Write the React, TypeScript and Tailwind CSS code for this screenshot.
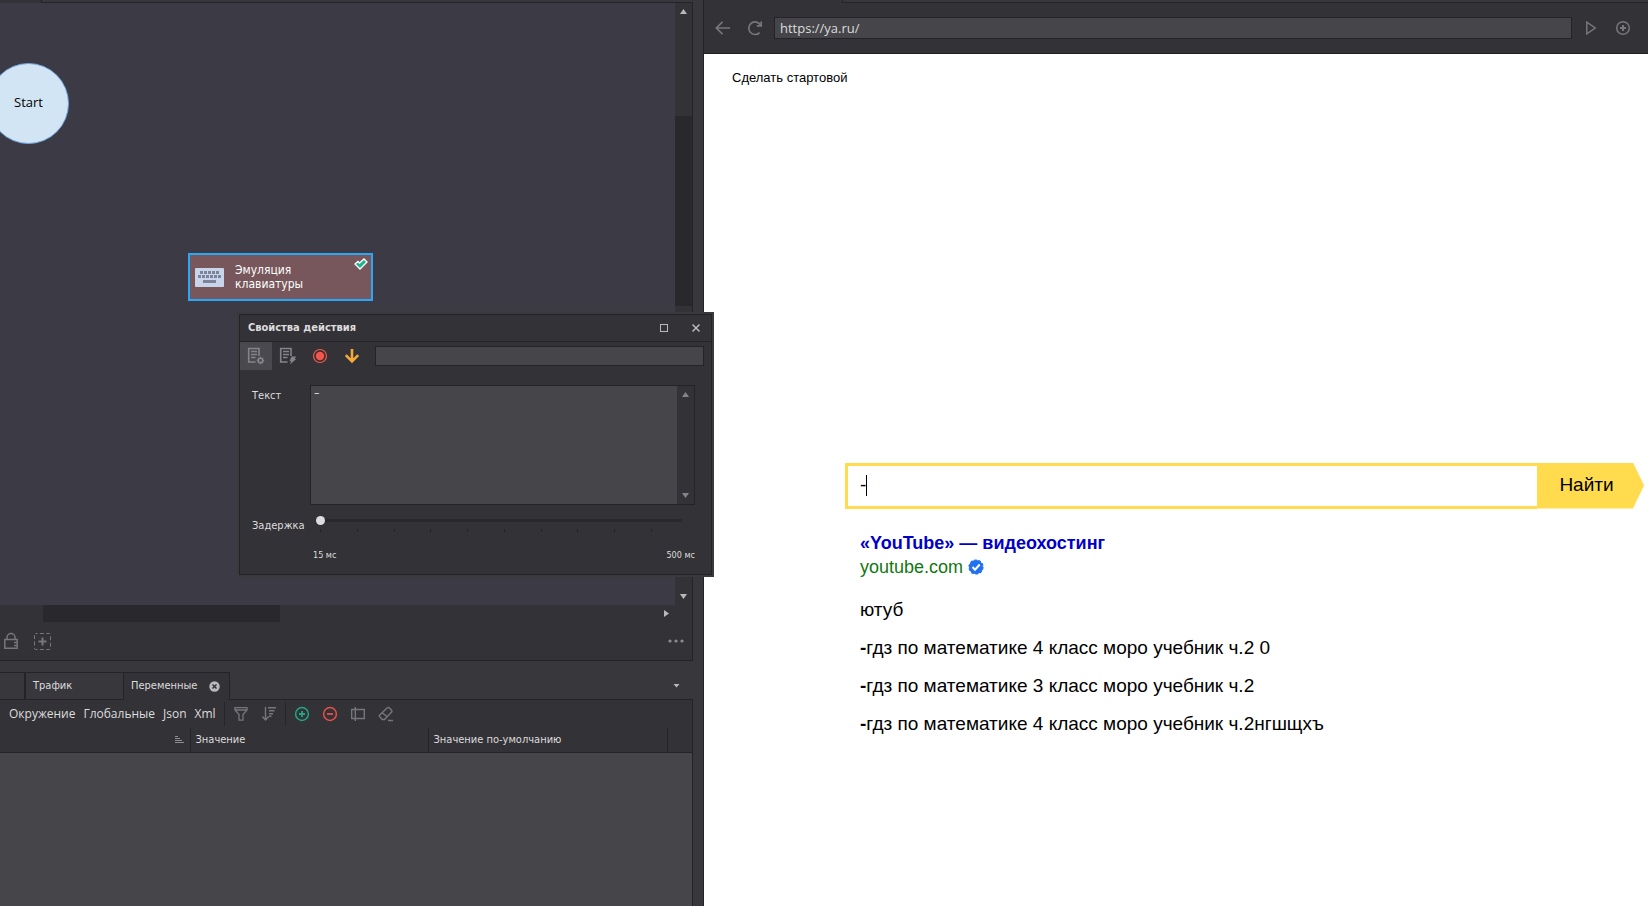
import { useState } from "react";
import type { ReactNode } from "react";

const TICKS = [0, 1, 2, 3, 4, 5, 6, 7, 8, 9];

const SUGGESTIONS = [
  { prefix: "", text: "ютуб" },
  { prefix: "-", text: "гдз по математике 4 класс моро учебник ч.2 0" },
  { prefix: "-", text: "гдз по математике 3 класс моро учебник ч.2" },
  { prefix: "-", text: "гдз по математике 4 класс моро учебник ч.2нгшщхъ" },
];

function Triangle({ dir, className = "" }: { dir: "up" | "down" | "right"; className?: string }) {
  const points = { up: "0,6 7,6 3.5,1", down: "0,1 7,1 3.5,6", right: "1,0 6,3.5 1,7" }[dir];
  return (
    <svg width="7" height="7" viewBox="0 0 7 7" className={className}>
      <polygon points={points} fill="currentColor" />
    </svg>
  );
}

function IconButton({ label, className = "", children }: { label: string; className?: string; children: ReactNode }) {
  return (
    <button aria-label={label} className={`flex shrink-0 items-center justify-center ${className}`}>
      {children}
    </button>
  );
}

/* Lines of a document, shared by both property page icons */
function DocLines() {
  return (
    <>
      <path d="M8.5 15H1.7V1.5H12V9" stroke="currentColor" strokeWidth="1.6" />
      <path d="M4 4.5H10M4 7.5H10M4 10.5H8.5" stroke="currentColor" strokeWidth="1.3" />
    </>
  );
}

function Canvas() {
  return (
    <div className="relative min-w-0 flex-1 overflow-hidden bg-[#3c3b45]">
      <div className="absolute -left-3 top-[60px] flex size-[81px] items-center justify-center rounded-full border border-[#6fa3dc] bg-[#d2e5f4] pb-0.5 font-['Open_Sans',sans-serif] text-[13px] text-black">
        Start
      </div>
      <div className="absolute left-[188px] top-[250px] flex h-12 w-[185px] items-center border-2 border-[#29a8f8] bg-[#77575c] pl-1">
        <svg width="31" height="22" viewBox="0 0 31 22" className="shrink-0">
          <rect x="1" y="2" width="29" height="19" rx="1" fill="#c8d4ea" />
          <path d="M6 6.5H25" stroke="#7d8399" strokeWidth="3" strokeDasharray="3 1" />
          <path d="M4 10.5H27" stroke="#7d8399" strokeWidth="3" strokeDasharray="3 1" />
          <path d="M9 15.5H22" stroke="#7d8399" strokeWidth="3" />
        </svg>
        <span className="ml-2.5 w-24 text-xs leading-[14px] text-white">Эмуляция клавиатуры</span>
        <svg width="14" height="12" viewBox="0 0 14 12" className="absolute right-[3px] top-[3px]">
          <path d="M1 6L4 3.5L5.5 5L10 1L13 4L6 11Z" fill="#21b58f" stroke="#fff" strokeWidth="1.3" />
        </svg>
      </div>
    </div>
  );
}

function ProjectPanel() {
  return (
    <section className="flex min-h-0 flex-1 flex-col">
      <div className="flex h-[3px] shrink-0">
        <div className="w-[41px] bg-[#333236]" />
        <div className="flex-1 border-b border-l border-[#242328] bg-[#38373b]" />
      </div>
      <div className="flex min-h-0 flex-1 flex-col border-b border-r border-[#242328] bg-[#333236]">
        <div className="flex min-h-0 flex-1">
          <Canvas />
          <div className="flex w-[17px] flex-col items-center justify-between py-[5px] text-[#b9b8bb]">
            <Triangle dir="up" className="shrink-0" />
            <div className="mb-[287px] mt-[101px] w-full flex-1 bg-[#29282c]" />
            <Triangle dir="down" className="shrink-0" />
          </div>
        </div>
        <div className="flex h-[17px] shrink-0 items-center pr-[22px] text-[#b9b8bb]">
          <div className="ml-[43px] h-full w-[237px] bg-[#29282c]" />
          <Triangle dir="right" className="ml-auto" />
        </div>
        <div className="flex h-[38px] shrink-0 items-center pl-1 pr-2 text-[#77767d]">
          <IconButton label="Заблокировать">
            <svg width="15" height="18" viewBox="0 0 15 18" fill="none" stroke="currentColor" strokeWidth="1.5">
              <path d="M3 7.5V5.5A4 4 0 0 1 11 5.5V7.5" />
              <path d="M0.8 7.5H13.2V16.2H0.8ZM10 10.5H13M10 13.5H13" />
            </svg>
          </IconButton>
          <IconButton label="Добавить" className="ml-[15px]">
            <svg width="17" height="17" viewBox="0 0 17 17" fill="none" stroke="currentColor">
              <rect x="0.5" y="0.5" width="16" height="16" rx="1" strokeDasharray="4 2.4" strokeDashoffset="2" />
              <path d="M8.5 4.5V12.5M4.5 8.5H12.5" strokeWidth="2" />
            </svg>
          </IconButton>
          <IconButton label="Ещё" className="ml-auto">
            <svg width="16" height="4" viewBox="0 0 16 4" fill="#8d8c92">
              <circle cx="2" cy="2" r="1.6" />
              <circle cx="8" cy="2" r="1.6" />
              <circle cx="14" cy="2" r="1.6" />
            </svg>
          </IconButton>
        </div>
      </div>
    </section>
  );
}

function VariablesPanel() {
  return (
    <section className="mt-[11px] flex h-[234px] shrink-0 flex-col">
      <div className="flex h-7 shrink-0">
        <div className="w-[25px] border-b border-r border-t border-[#242328]" />
        <button className="w-[98px] border-b border-l border-t border-[#242328] pl-[7px] text-left text-[#dddcde]">Трафик</button>
        <div className="flex w-[107px] items-center justify-between border-x border-t border-[#242328] bg-[#333236] pl-[7px] pr-[9px]">
          <button className="text-[#dddcde]">Переменные</button>
          <IconButton label="Закрыть вкладку">
            <svg width="11" height="11" viewBox="0 0 11 11">
              <circle cx="5.5" cy="5.5" r="5.2" fill="#b9b8bb" />
              <path d="M3.5 3.5L7.5 7.5M7.5 3.5L3.5 7.5" stroke="#333236" strokeWidth="1.5" />
            </svg>
          </IconButton>
        </div>
        <div className="flex flex-1 items-center justify-end border-b border-[#242328] pr-[13px] text-[#b9b8bb]">
          <svg width="7" height="4" viewBox="0 0 7 4">
            <polygon points="0.5,0 6.5,0 3.5,3.5" fill="currentColor" />
          </svg>
        </div>
      </div>
      <div className="flex min-h-0 flex-1 flex-col border-r border-[#242328] bg-[#464549]">
        <div className="flex h-7 shrink-0 items-center bg-[#333236] pl-[9px] font-['Open_Sans',sans-serif] text-xs text-[#dddcde]">
          <div className="flex gap-2">
            <button>Окружение</button>
            <button>Глобальные</button>
            <button>Json</button>
            <button>Xml</button>
          </div>
          <div className="ml-2 h-6 w-px bg-[#26252a]" />
          <div className="flex gap-3 px-2 text-[#77767d]">
            <IconButton label="Фильтр">
              <svg width="16" height="16" viewBox="0 0 16 16" fill="none" stroke="currentColor" strokeWidth="1.3">
                <path d="M2 1.7H14V4L10 8.5V14.2H6V8.5L2 4ZM2 4H14" />
              </svg>
            </IconButton>
            <IconButton label="Сортировка">
              <svg width="16" height="16" viewBox="0 0 16 16" fill="none" stroke="currentColor" strokeWidth="1.4">
                <path d="M4.5 1V14M1.3 10.5L4.5 14L7.7 10.5M7 1.7H15M8 4.7H13.5M8 7.7H12M8 10.2H10.5" />
              </svg>
            </IconButton>
          </div>
          <div className="h-6 w-px bg-[#26252a]" />
          <div className="flex gap-3 px-2 text-[#77767d]">
            <IconButton label="Добавить переменную" className="text-[#21a583]">
              <svg width="16" height="16" viewBox="0 0 16 16" fill="none" stroke="currentColor" strokeWidth="1.5">
                <circle cx="8" cy="8" r="6.4" />
                <path d="M8 5V11M5 8H11" strokeWidth="1.8" />
              </svg>
            </IconButton>
            <IconButton label="Удалить переменную" className="text-[#e5504b]">
              <svg width="16" height="16" viewBox="0 0 16 16" fill="none" stroke="currentColor" strokeWidth="1.5">
                <circle cx="8" cy="8" r="6.4" />
                <path d="M5 8H11" strokeWidth="1.8" />
              </svg>
            </IconButton>
            <IconButton label="Переименовать">
              <svg width="16" height="16" viewBox="0 0 16 16" fill="none" stroke="currentColor" strokeWidth="1.4">
                <path d="M1.7 3.5H14.3V12.5H1.7ZM5.3 1V15" />
              </svg>
            </IconButton>
            <IconButton label="Очистить">
              <svg width="16" height="16" viewBox="0 0 16 16" fill="none" stroke="currentColor" strokeWidth="1.4">
                <path d="M1.5 9.3L9.3 1.8Q10.2 1 11.2 1.8L13.6 4.2Q14.4 5.2 13.6 6.1L6.5 13.5H4.3L1.5 10.6Q1 10 1.5 9.3ZM4.2 6.8L9.2 10.8M10 14.5H15" />
              </svg>
            </IconButton>
          </div>
        </div>
        <table className="w-full table-fixed bg-[#333236] text-left text-[#dddcde]">
          <thead>
            <tr className="h-6 border-b border-[#242328]">
              <th className="w-[190px] border-r border-[#242328] pr-1.5">
                <svg width="9" height="7" viewBox="0 0 9 7" className="ml-auto" stroke="#8d8c92">
                  <path d="M0 0.5H3M0 2.5H5M0 4.5H7M0 6.5H9" />
                </svg>
              </th>
              <th className="w-[238px] border-r border-[#242328] pl-[5px] font-normal">Значение</th>
              <th className="w-[239px] border-r border-[#242328] pl-[5px] font-normal">Значение по-умолчанию</th>
              <th />
            </tr>
          </thead>
        </table>
      </div>
    </section>
  );
}

function ActionDialog() {
  const [text, setText] = useState("–");
  const [delay, setDelay] = useState(15);

  return (
    <div
      role="dialog"
      aria-labelledby="dialog-title"
      className="absolute left-[237px] top-[312px] z-10 w-[477px] border-2 border-[#3a393d] bg-[#333236] text-[#dddcde]"
    >
      <div className="border border-[#242328]">
        <div className="flex h-[27px] items-center border-b border-[#242328] pl-2 pr-[11px]">
          <h2 id="dialog-title" className="text-[11px] font-bold">Свойства действия</h2>
          <IconButton label="Развернуть" className="ml-auto">
            <svg width="8" height="8" viewBox="0 0 8 8" fill="none" stroke="#b9b8bb">
              <rect x="0.5" y="0.5" width="7" height="7" />
            </svg>
          </IconButton>
          <IconButton label="Закрыть" className="ml-6">
            <svg width="8" height="8" viewBox="0 0 8 8" stroke="#b9b8bb" strokeWidth="1.5">
              <path d="M0.5 0.5L7.5 7.5M7.5 0.5L0.5 7.5" />
            </svg>
          </IconButton>
        </div>

        <div className="flex h-7 items-center pr-[7px] text-[#85848c]">
          <IconButton label="Свойства" className="h-7 w-8 bg-[#4a494d]">
            <svg width="18" height="18" viewBox="0 0 18 18" fill="none">
              <DocLines />
              <circle cx="13.5" cy="13.5" r="2.2" stroke="currentColor" strokeWidth="1.6" />
              <path d="M13.5 9.8V11M13.5 16V17.2M9.8 13.5H11M16 13.5H17.2M11 11L11.8 11.8M15.2 15.2L16 16M16 11L15.2 11.8M11.8 15.2L11 16" stroke="currentColor" strokeWidth="1.3" />
            </svg>
          </IconButton>
          <IconButton label="Дополнительно" className="h-7 w-8">
            <svg width="18" height="18" viewBox="0 0 18 18" fill="none">
              <DocLines />
              <path d="M12.5 9.5H17L15.8 12H17.2L11 17.5L12.3 14.2H10.5Z" fill="currentColor" />
            </svg>
          </IconButton>
          <IconButton label="Запись" className="h-7 w-8">
            <svg width="16" height="16" viewBox="0 0 16 16" fill="none">
              <circle cx="8" cy="8" r="6.5" stroke="#f5554a" strokeWidth="1.2" />
              <circle cx="8" cy="8" r="4.2" fill="#f5554a" />
            </svg>
          </IconButton>
          <IconButton label="Выполнить" className="h-7 w-8">
            <svg width="16" height="16" viewBox="0 0 16 16" fill="none" stroke="#f5a936" strokeWidth="2.6">
              <path d="M8 1V13M1.8 7.2L8 13.4L14.2 7.2" />
            </svg>
          </IconButton>
          <input
            aria-label="Комментарий"
            className="ml-[7px] h-5 min-w-0 flex-1 border border-[#242328] bg-[#464549] px-1 outline-none"
          />
        </div>

        <div className="flex pl-3 pr-4 pt-[15px]">
          <label htmlFor="action-text" className="w-[58px] shrink-0 pt-[3px]">Текст</label>
          <div className="flex h-[120px] flex-1 border border-[#242328]">
            <textarea
              id="action-text"
              value={text}
              onChange={(e) => setText(e.target.value)}
              className="min-w-0 flex-1 resize-none bg-[#464549] px-[3px] text-xs leading-[14px] outline-none"
            />
            <div className="flex w-[17px] flex-col items-center justify-between py-[5px] text-[#85848c]">
              <Triangle dir="up" />
              <Triangle dir="down" />
            </div>
          </div>
        </div>

        <div className="flex h-[69px] pl-3 pr-4 pt-2.5">
          <label htmlFor="action-delay" className="w-[58px] shrink-0 pt-[3px]">Задержка</label>
          <div className="min-w-0 flex-1">
            <div className="pl-1.5 pr-[13px]">
              <input
                id="action-delay"
                type="range"
                min={15}
                max={500}
                value={delay}
                onChange={(e) => setDelay(Number(e.target.value))}
                className="block h-[11px] w-full appearance-none bg-transparent [&::-webkit-slider-runnable-track]:h-[3px] [&::-webkit-slider-runnable-track]:rounded-full [&::-webkit-slider-runnable-track]:bg-[#29282c] [&::-webkit-slider-thumb]:-mt-[3px] [&::-webkit-slider-thumb]:size-[9px] [&::-webkit-slider-thumb]:appearance-none [&::-webkit-slider-thumb]:rounded-full [&::-webkit-slider-thumb]:bg-[#dddcde]"
              />
            </div>
            <div className="mt-[3px] flex justify-between pl-2.5 pr-[43px]">
              {TICKS.map((tick) => (
                <span key={tick} className="h-[3px] w-px bg-[#232227]" />
              ))}
            </div>
            <div className="mt-4 flex justify-between pl-[3px] text-[9px] leading-[14px]">
              <span>15 мс</span>
              <span>500 мс</span>
            </div>
          </div>
        </div>
      </div>
    </div>
  );
}

function BrowserBar() {
  return (
    <header className="shrink-0 border-b border-[#1f1e22] bg-[#333236]">
      <div className="flex h-[3px]">
        <div className="w-[138px]" />
        <div className="flex-1 border-b border-l border-[#242328] bg-[#38373b]" />
      </div>
      <div className="flex h-[50px] items-center pl-[11px] pr-[17px] text-[#77767d]">
        <IconButton label="Назад">
          <svg width="16" height="16" viewBox="0 0 16 16" fill="none" stroke="currentColor" strokeWidth="1.7">
            <path d="M15 8H1.5M7.5 1.8L1.3 8L7.5 14.2" />
          </svg>
        </IconButton>
        <IconButton label="Обновить" className="ml-4">
          <svg width="16" height="16" viewBox="0 0 16 16" fill="none" stroke="currentColor" strokeWidth="1.7">
            <path d="M12.6 12.6A6.3 6.3 0 1 1 13.6 5.2" />
            <path d="M14.2 1.5V5.8H9.8" />
          </svg>
        </IconButton>
        <input
          aria-label="Адрес"
          defaultValue="https://ya.ru/"
          className="ml-[11px] h-[22px] min-w-0 flex-1 border border-[#242328] bg-[#464549] px-[5px] font-['Open_Sans',sans-serif] text-[13px] text-[#dddcde] outline-none"
        />
        <IconButton label="Перейти" className="ml-3">
          <svg width="16" height="16" viewBox="0 0 16 16" fill="none" stroke="currentColor" strokeWidth="1.5">
            <path d="M2.8 2.2V13.8L11.2 8Z" />
          </svg>
        </IconButton>
        <IconButton label="Новая вкладка" className="ml-[15px]">
          <svg width="16" height="16" viewBox="0 0 16 16" fill="none" stroke="currentColor" strokeWidth="1.5">
            <circle cx="8" cy="8" r="6.3" />
            <path d="M8 5V11M5 8H11" strokeWidth="2" />
          </svg>
        </IconButton>
      </div>
    </header>
  );
}

function SearchPage() {
  const [query, setQuery] = useState("-");

  return (
    <main className="flex-1 bg-white font-['Liberation_Sans',Arial,sans-serif] text-black">
      <a href="#home" className="ml-7 mt-4 inline-block text-[13px] leading-4">Сделать стартовой</a>
      <form className="ml-[141px] mr-1 mt-[376px] flex h-[46px] text-[19px]" onSubmit={(e) => e.preventDefault()}>
        <div className="relative flex min-w-0 flex-1 border-y-[3px] border-l-[3px] border-[#ffdb4d]">
          <input
            aria-label="Запрос"
            value={query}
            onChange={(e) => setQuery(e.target.value)}
            className="min-w-0 flex-1 bg-white px-3 outline-none"
          />
          <span className="absolute left-[18px] top-[9px] h-[21px] w-px bg-black" />
        </div>
        <button className="w-[107px] bg-[#ffdb4d] pr-2 [clip-path:polygon(0_0,calc(100%-11px)_0,100%_50%,calc(100%-11px)_100%,0_100%)]">
          Найти
        </button>
      </form>
      <div className="ml-[156px] mt-[22px] text-lg leading-6">
        <a href="#youtube" className="block font-bold text-[#0000cc]">«YouTube» — видеохостинг</a>
        <div className="flex items-center gap-[5px] text-[#117711]">
          youtube.com
          <svg width="16" height="16" viewBox="0 0 16 16">
            <circle cx="8" cy="8" r="7" fill="#2070f0" stroke="#2070f0" strokeWidth="1.2" strokeDasharray="2.8 1.6" />
            <path d="M4.5 8L7 10.7L11.7 5.5" fill="none" stroke="#fff" strokeWidth="2" />
          </svg>
        </div>
      </div>
      <ul className="ml-[156px] mt-3 text-[19px] leading-[38px]">
        {SUGGESTIONS.map((item) => (
          <li key={item.text}>
            {item.prefix && <b>{item.prefix}</b>}
            {item.text}
          </li>
        ))}
      </ul>
    </main>
  );
}

export default function App() {
  return (
    <div className="relative flex h-screen overflow-hidden bg-[#38373b] font-['DejaVu_Sans_Condensed','Noto_Sans',sans-serif] text-[11px]">
      <div className="flex w-[693px] shrink-0 flex-col">
        <ProjectPanel />
        <VariablesPanel />
      </div>
      <div className="ml-2.5 flex min-w-0 flex-1 flex-col border-l border-[#242328]">
        <BrowserBar />
        <SearchPage />
      </div>
      <ActionDialog />
    </div>
  );
}
